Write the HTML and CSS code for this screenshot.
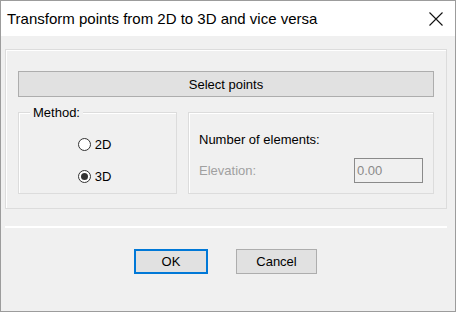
FILE: index.html
```html
<!DOCTYPE html>
<html lang="en">
<head>
    <meta charset="UTF-8">
    <title>Transform points</title>
    <link rel="stylesheet" href="styles.css">
</head>
<body>
    <div class="window">
        <div class="titlebar">
            <span class="title">Transform points from 2D to 3D and vice versa</span>
            <svg class="close" width="14" height="14" viewBox="0 0 14 14">
                <path d="M0.5 0.5 L13.5 13.5 M13.5 0.5 L0.5 13.5" stroke="#111" stroke-width="1.1" fill="none"/>
            </svg>
        </div>

        <div class="client">
            <div class="outer-group">
                <button class="btn select-btn">Select points</button>

                <div class="group-row">
                    <div class="group method">
                        <span class="group-title">Method:</span>
                        <div class="radios">
                            <label class="radio"><span class="dot"></span>2D</label>
                            <label class="radio"><span class="dot checked"></span>3D</label>
                        </div>
                    </div>

                    <div class="group options">
                        <div class="count-label">Number of elements:</div>
                        <div class="elev-row">
                            <span class="disabled">Elevation:</span>
                            <span class="textbox">0.00</span>
                        </div>
                    </div>
                </div>
            </div>

            <div class="separator"></div>

            <div class="actions">
                <button class="btn ok">OK</button>
                <button class="btn cancel">Cancel</button>
            </div>
        </div>
    </div>
</body>
</html>
```

FILE: styles.css
```css
body {
    margin: 0;
    font-family: "Liberation Sans", Arial, sans-serif;
    background-color: #ffffff;
}
.window {
    width: 456px;
    height: 312px;
    box-sizing: border-box;
    border: 1px solid #9c9c9c;
    background-color: #f0f0f0;
    overflow: hidden;
}
.titlebar {
    height: 35px;
    background-color: #ffffff;
    display: flex;
    align-items: center;
    justify-content: space-between;
    padding: 0 12px 0 6px;
}
.title {
    font-size: 15px;
    color: #000;
}
.close {
    display: block;
}
.client {
    padding: 13px 0 0 4px;
}
.outer-group {
    width: 442px;
    height: 160px;
    box-sizing: border-box;
    border: 1px solid #dcdcdc;
    box-shadow: inset 1px 1px 0 #ffffff;
    padding: 21px 12px 14px 12px;
}
.btn {
    font-family: "Liberation Sans", Arial, sans-serif;
    font-size: 13px;
    color: #000;
    background-color: #e1e1e1;
    border: 1px solid #adadad;
    padding: 0;
    box-sizing: border-box;
}
.select-btn {
    display: block;
    width: 416px;
    height: 26px;
}
.group-row {
    display: flex;
    gap: 11px;
    margin-top: 15px;
}
.group {
    height: 82px;
    box-sizing: border-box;
    border: 1px solid #dcdcdc;
    box-shadow: inset 1px 1px 0 #ffffff;
    font-size: 13px;
}
.method {
    width: 159px;
}
.group-title {
    display: block;
    width: fit-content;
    margin: -8px 0 0 11px;
    padding: 0 3px;
    line-height: 15px;
    background-color: #f0f0f0;
    color: #000;
}
.radios {
    display: flex;
    flex-direction: column;
    align-items: center;
    gap: 12px;
    margin-top: 14px;
    padding-right: 6px;
}
.radio {
    display: flex;
    align-items: center;
    gap: 4px;
    height: 20px;
    color: #000;
}
.dot {
    width: 13px;
    height: 13px;
    box-sizing: border-box;
    border: 1px solid #333;
    border-radius: 50%;
    background-color: #fff;
    display: flex;
    align-items: center;
    justify-content: center;
}
.dot.checked::after {
    content: "";
    width: 7px;
    height: 7px;
    border-radius: 50%;
    background-color: #333;
}
.options {
    width: 246px;
    padding: 19px 10px 0 10px;
}
.count-label {
    line-height: 16px;
    color: #000;
}
.elev-row {
    display: flex;
    align-items: center;
    justify-content: space-between;
    margin-top: 10px;
    height: 25px;
}
.disabled {
    color: #a0a0a0;
}
.textbox {
    width: 69px;
    height: 25px;
    box-sizing: border-box;
    border: 1px solid #8a8a8a;
    color: #8a8a8a;
    padding: 4px 2px;
    line-height: 15px;
}
.separator {
    width: 442px;
    height: 2px;
    margin-top: 17px;
    background-color: #ffffff;
}
.actions {
    display: flex;
    gap: 28px;
    margin-top: 21px;
    padding-left: 129px;
}
.actions .btn {
    height: 25px;
}
.ok {
    width: 74px;
    border: 2px solid #0078d7;
}
.cancel {
    width: 81px;
}
```
